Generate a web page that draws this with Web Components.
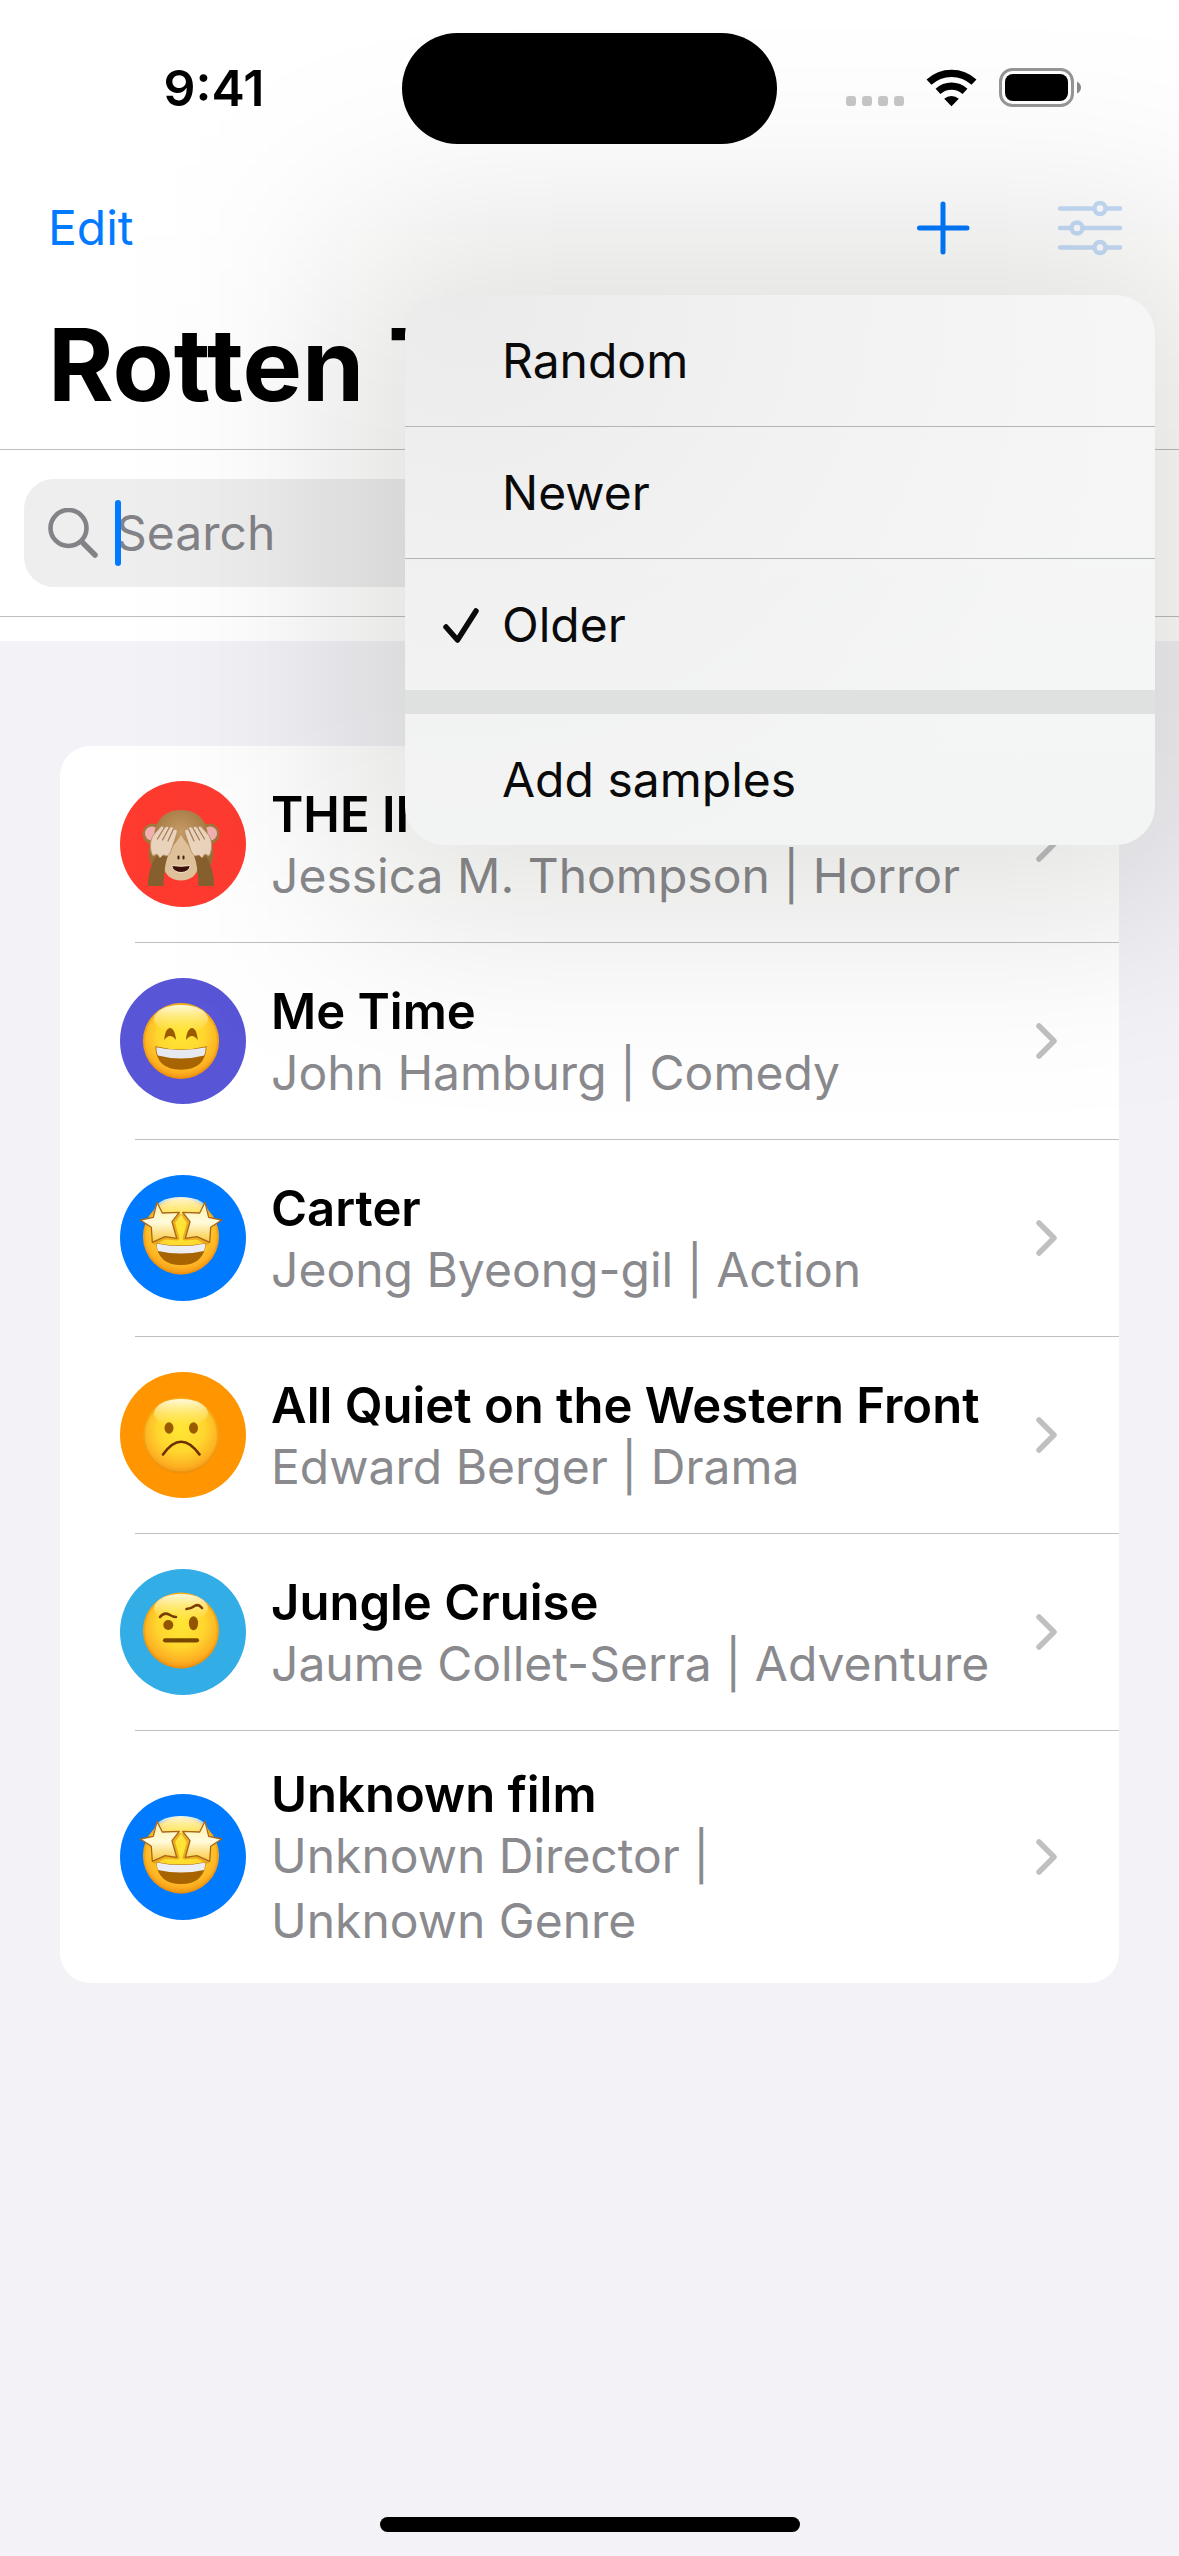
<!DOCTYPE html>
<html lang="en">
<head>
<meta charset="utf-8">
<meta name="viewport" content="width=device-width, initial-scale=1">
<title>Films</title>
<style>
  html, body { margin: 0; min-height: 100%; }
  body {
    --tint: #007aff;
    --grouped: #f2f2f7;
    --secondary: #8a8a8e;
    --separator: #bfbfc1;
    font-family: Inter, "Liberation Sans", sans-serif;
    font-size: 48px;
    line-height: 60px;
    color: #000;
    background: var(--grouped);
  }
</style>
</head>
<body>
<film-app>
  <status-bar slot="header" time="9:41"></status-bar>
  <nav-bar slot="header">
    <option-menu slot="menu">
      <menu-option>Random</menu-option>
      <menu-option>Newer</menu-option>
      <menu-option checked>Older</menu-option>
      <menu-option section>Add samples</menu-option>
    </option-menu>
  </nav-bar>
  <large-title slot="header">Rotten T</large-title>
  <search-field slot="header"></search-field>
  <film-list>
    <film-row mood="monkey" color="#ff3b30">THE IN<span slot="detail">Jessica M. Thompson | Horror</span></film-row>
    <film-row mood="grin" color="#5856d6">Me Time<span slot="detail">John Hamburg | Comedy</span></film-row>
    <film-row mood="stars" color="#007aff">Carter<span slot="detail">Jeong Byeong-gil | Action</span></film-row>
    <film-row mood="sad" color="#ff9500">All Quiet on the Western Front<span slot="detail">Edward Berger | Drama</span></film-row>
    <film-row mood="doubt" color="#32ade6">Jungle Cruise<span slot="detail">Jaume Collet-Serra | Adventure</span></film-row>
    <film-row mood="stars" color="#007aff">Unknown film<span slot="detail">Unknown Director&nbsp;| Unknown&nbsp;Genre</span></film-row>
  </film-list>
  <home-indicator slot="footer"></home-indicator>
</film-app>

<script>
const define = (name, html, setup) => {
  const tpl = document.createElement('template');
  tpl.innerHTML = html;
  customElements.define(name, class extends HTMLElement {
    constructor() {
      super();
      this.attachShadow({ mode: 'open' }).append(tpl.content.cloneNode(true));
    }
    connectedCallback() { if (setup) setup(this, this.shadowRoot); }
  });
};

define('film-app', `
  <style>
    :host { display: flex; flex-direction: column; min-height: 100vh; position: relative; overflow: hidden; }
    header { background: #fff; padding-bottom: 24px; position: relative; z-index: 1; }
    main { flex: 1; padding: 105px 60px 60px; }
  </style>
  <header><slot name="header"></slot></header>
  <main><slot></slot></main>
  <slot name="footer"></slot>`);

define('status-bar', `
  <style>
    :host { display: grid; grid-template-columns: 1fr 375px 1fr; align-items: start; height: 162px; }
    .time { padding: 58px 0 0 26px; text-align: center; font-weight: 600; font-size: 50px; }
    .island { height: 111px; margin-top: 33px; border-radius: 56px; background: #000; }
    .icons { display: flex; justify-content: flex-end; padding: 66px 96px 0 0; }
    svg { display: block; }
  </style>
  <div class="time"></div>
  <div class="island"></div>
  <div class="icons">
    <svg width="240" height="44" viewBox="0 0 240 44" role="img" aria-label="Wi-Fi on, battery full">
      <g fill="#c7c7c7"><rect x="3" y="30" width="10" height="10" rx="3"/><rect x="19" y="30" width="10" height="10" rx="3"/><rect x="35" y="30" width="10" height="10" rx="3"/><rect x="51" y="30" width="10" height="10" rx="3"/></g>
      <g fill="none" stroke="#000" stroke-width="7.2">
        <path d="M86 16.2a33 33 0 0 1 45 0"/>
        <path d="M95 25.4a20 20 0 0 1 27 0"/>
      </g>
      <path d="M108.500 40.300l-7.300-7.600a11 11 0 0 1 14.600 0z"/>
      <rect x="157.500" y="3.500" width="72" height="36" rx="12" fill="none" stroke="#969696" stroke-width="3"/>
      <rect x="162" y="8" width="63" height="27" rx="8"/>
      <path d="M234 15.500q4 2 4 6t-4 6z" fill="#8a8a8a"/>
    </svg>
  </div>`, (el, root) => { root.querySelector('.time').textContent = el.getAttribute('time'); });

define('nav-bar', `
  <style>
    :host { display: flex; align-items: center; height: 132px; padding: 0 48px; position: relative; z-index: 2; }
    button { border: 0; padding: 0; background: none; font: inherit; color: var(--tint); }
    .edit { margin-right: auto; }
    .actions { display: flex; gap: 73px; align-items: center; padding-right: 9px; }
    svg { display: block; }
    .menu { position: absolute; top: 100%; right: 24px; width: min(750px, 80vw); padding-top: 1px; }
  </style>
  <button class="edit" type="button">Edit</button>
  <div class="actions">
    <button type="button" aria-label="Add film">
      <svg width="72" height="72" viewBox="0 0 72 72" fill="none" stroke="currentColor" stroke-width="5" stroke-linecap="round"><path d="M12.500 36h47.500M36 12v48"/></svg>
    </button>
    <button type="button" aria-label="Sort films" aria-expanded="true">
      <svg width="70" height="72" viewBox="0 0 70 72" fill="none" stroke="#c6ddf8" stroke-width="4.400" stroke-linecap="round">
        <path d="M8 16.500h33M55 16.500h13M8 36h10M32 36h36M8 55.500h33M55 55.500h13"/>
        <circle cx="48" cy="16.500" r="5.500"/><circle cx="25" cy="36" r="5.500"/><circle cx="48" cy="55.500" r="5.500"/>
      </svg>
    </button>
  </div>
  <div class="menu"><slot name="menu"></slot></div>`);

define('option-menu', `
  <style>
    :host { display: block; position: relative; }
    .shade { position: absolute; inset: -60px; background: rgba(8, 8, 0, .13); filter: blur(105px); pointer-events: none; }
    .panel {
      position: relative; border-radius: 39px; overflow: hidden;
      background: radial-gradient(circle at 8% 0, #ebebeb, rgba(240, 240, 240, .8) 35%, rgba(245, 245, 245, 0) 75%), linear-gradient(#f6f6f6, #f3f5f4);
    }
  </style>
  <div class="shade"></div>
  <div class="panel" role="menu"><slot></slot></div>`);

define('menu-option', `
  <style>
    :host { display: block; border-top: 1px solid #b3b6b5; }
    :host(:first-child) { border-top: 0; }
    :host([section]) { border-top: 24px solid #dfe0e0; }
    button {
      display: grid; grid-template-columns: 36px 1fr; gap: 23px; align-items: center;
      width: 100%; height: 131px; padding: 0 38px; border: 0; background: none;
      font: inherit; color: #0a0a0a; text-align: left;
    }
    svg { display: block; visibility: hidden; }
    :host([checked]) svg { visibility: visible; }
  </style>
  <button type="button" role="menuitemradio">
    <svg width="36" height="36" viewBox="0 0 36 36" fill="none" stroke="#0a0a0a" stroke-width="5.500" stroke-linecap="round" stroke-linejoin="round"><path d="M3 20l11.500 13L33 4"/></svg>
    <span><slot></slot></span>
  </button>`, (el, root) => {
    root.querySelector('button').setAttribute('aria-checked', String(el.hasAttribute('checked')));
  });

define('large-title', `
  <style>
    :host { display: block; border-bottom: 1px solid var(--separator); padding: 11px 48px 24px; overflow: hidden; }
    h1 { margin: 0; font-size: 100px; line-height: 120px; font-weight: 700; white-space: nowrap; }
  </style>
  <h1><slot></slot></h1>`);

define('search-field', `
  <style>
    :host { display: block; border-bottom: 1px solid var(--separator); padding: 29px 24px; }
    label { display: flex; align-items: center; gap: 18px; height: 108px; border-radius: 30px; background: #eeeeef; padding: 0 24px; box-sizing: border-box; }
    svg { flex: none; display: block; }
    .box { flex: 1; display: flex; position: relative; }
    .caret { position: absolute; left: -1px; top: -3px; width: 6px; height: 66px; border-radius: 3px; background: var(--tint); }
    input { flex: 1; min-width: 0; border: 0; padding: 0; background: none; outline: 0; font: inherit; height: 60px; }
    input::placeholder { color: #838387; opacity: 1; }
  </style>
  <label>
    <svg width="50" height="50" viewBox="0 0 50 50" fill="none" stroke="#838387" stroke-width="4.600" stroke-linecap="round"><circle cx="20.500" cy="20" r="18"/><path d="M34 34l13 13" stroke-width="5.500"/></svg>
    <span class="box"><input type="text" placeholder="Search" aria-label="Search"><span class="caret"></span></span>
  </label>`);

define('film-list', `
  <style>
    :host { display: block; background: #fff; border-radius: 30px; overflow: hidden; }
  </style>
  <div role="list"><slot></slot></div>`);

const RIM = cy => `<circle cx="61" cy="${cy}" r="37" fill="none" stroke="#e58a00" stroke-opacity=".4" stroke-width="2"/>`;
const FACE = cy => `<circle cx="61" cy="${cy}" r="38" fill="url(#face)"/>` + RIM(cy);
const SHINE = cy => `<ellipse cx="61" cy="${cy - 22}" rx="27" ry="14" fill="url(#shine)"/>`;

const MOODS = {
  stars: FACE(61.5) + SHINE(58) + `
    <path d="M36 68q25 5 50 0q-2 22-25 22t-25-22z" fill="#a86400"/>
    <path d="M36.500 68.500q24.500 5 49 0q-.5 5-1.500 7.500q-23 5-46 0q-1-2.500-1.500-7.500z" fill="#eceef3"/>
    <g fill="none" stroke="#e39a14" stroke-width="4" stroke-opacity=".7" stroke-linejoin="round">
      <path d="M59.300 38.500L53 47.500 57.500 63.500 45 62.500 33 68.500"/>
      <path d="M62.700 38.500L69 47.500 64.500 63.500 77 62.500 89 68.500"/>
    </g>
    <g fill="url(#star)" stroke="#a8651a" stroke-width="1.300" stroke-linejoin="round">
      <path d="M37 27.300L42.300 38 59.300 37.300 52 46.700 56.700 63.300 45 61.700 32.300 67.300 31.300 52.300 20.300 45 33.300 42.300z"/>
      <path d="M85 27.300L79.700 38 62.700 37.300 70 46.700 65.300 63.300 77 61.700 89.700 67.300 90.700 52.300 101.700 45 88.700 42.300z"/>
    </g>`,
  grin: FACE(63) + SHINE(63) + `
    <path d="M44.300 62C45 46 55 46 56 62Q50 54 44.300 62zM66 62C67 46 77 46 77.700 62Q72 54 66 62z" fill="#9a5a00"/>
    <path d="M35.300 68.300q25.700 6.500 51.400 0q-1 23.400-25.700 23.400t-25.700-23.400z" fill="#a86400"/>
    <path d="M36.300 69.200q24.700 5.500 49.400 0q0 5-1.500 8.300q-23.200 6-46.400 0q-1.500-3.300-1.500-8.300z" fill="#e6e9f0"/>`,
  sad: FACE(63.5) + SHINE(63) + `
    <ellipse cx="49" cy="56" rx="4.500" ry="5.700" fill="#9a5a00"/><ellipse cx="73.500" cy="56" rx="4.500" ry="5.700" fill="#9a5a00"/>
    <path d="M43 82.500q18-25.500 36.500 0" fill="none" stroke="#6a3000" stroke-width="2.600" stroke-linecap="round"/>`,
  doubt: FACE(61.5) + SHINE(61) + `
    <circle cx="48.300" cy="56" r="5" fill="#935500"/><ellipse cx="73.500" cy="54.300" rx="4.600" ry="7" fill="#935500"/>
    <path d="M40 48q4-5 9-2.500q4 2.500 7 2.500M66.500 40q5-.5 9-3.500q3-1.500 6.500 2.500" fill="none" stroke="#7a3c00" stroke-width="2.600" stroke-linecap="round"/>
    <path d="M45 71.300h32" stroke="#7a4700" stroke-width="4.200" stroke-linecap="round"/>`,
  monkey: `
    <g fill="#a3773f"><circle cx="33" cy="53" r="10.500"/><circle cx="89" cy="53" r="10.500"/></g>
    <g fill="#f3b0b2"><circle cx="32" cy="52.500" r="7"/><circle cx="90" cy="52.500" r="7"/></g>
    <path d="M61 29c17 0 26 11 27 26c5 7 7 17 4 26c-3 7-11 11-16 11H46c-5 0-13-4-16-11c-3-9-1-19 4-26c1-15 10-26 27-26z" fill="url(#fur)"/>
    <path d="M61 54c5 9 17 19 17 31c0 9-8 14.500-17 14.500s-17-5.500-17-14.500c0-12 12-22 17-31z" fill="#dfc19c"/>
    <path d="M58.500 75.500v2M63.500 75.500v2" stroke="#40200c" stroke-width="2" stroke-linecap="round"/>
    <path d="M51.500 84.500q9.500 1.500 19 0q-2 7-9.500 7t-9.500-7z" fill="#3d0e0c" stroke="#f4e4c7" stroke-width="1"/>
    <path d="M37 74l11 1c-3 7-4 17-4.500 30H28c0-12 3-23 9-31zM85 74l-11 1c3 7 4 17 4.500 30H94c0-12-3-23-9-31z" fill="#87602f"/>
    <g fill="#ead4bd" stroke="#b99168" stroke-width=".9" stroke-linejoin="round">
      <path d="M31.500 72c-2-7-1-14 2-18l7-8c2-2 4 0 3 2l2-2c2-1.500 4 0 3 2l2-2c2-1 3.500 1 2.500 3l2-1c2 0 2.500 2 2 4l-5 15c-1 4-3 7-5 8l-4-1-3 3-3-4-4 2z"/>
      <path d="M90.500 72c2-7 1-14-2-18l-7-8c-2-2-4 0-3 2l-2-2c-2-1.500-4 0-3 2l-2-2c-2-1-3.500 1-2.500 3l-2-1c-2 0-2.500 2-2 4l5 15c1 4 3 7 5 8l4-1 3 3 3-4 4 2z"/>
    </g>
    <path d="M43.500 48l-6 10M48.500 48l-6 11M53 49l-5 11M78.500 48l6 10M73.500 48l6 11M69 49l5 11" stroke="#a87a50" stroke-width="1.200" stroke-linecap="round"/>`
};

define('mood-badge', `
  <style>
    :host { display: block; flex: none; width: 126px; height: 126px; border-radius: 50%; }
    svg { display: block; }
  </style>
  <svg width="126" height="126" viewBox="0 0 126 126" aria-hidden="true">
    <defs>
      <radialGradient id="face" cx=".5" cy=".4" r=".62" fx=".5" fy=".42">
        <stop offset="0" stop-color="#ffe733"/><stop offset=".5" stop-color="#ffd62e"/><stop offset=".82" stop-color="#fdb022"/><stop offset="1" stop-color="#ee8c10"/>
      </radialGradient>
      <linearGradient id="shine" x1="0" y1="0" x2="0" y2="1"><stop offset="0" stop-color="#fffde6" stop-opacity=".95"/><stop offset="1" stop-color="#fff27a" stop-opacity="0"/></linearGradient>
      <linearGradient id="star" x1="0" y1="0" x2="0" y2="1"><stop offset="0" stop-color="#fff0a8"/><stop offset=".5" stop-color="#fffbdc"/><stop offset="1" stop-color="#fbc93c"/></linearGradient>
      <radialGradient id="fur" cx=".5" cy=".35" r=".6"><stop offset="0" stop-color="#c79c66"/><stop offset="1" stop-color="#9a6f38"/></radialGradient>
    </defs>
    <g></g>
  </svg>`, (el, root) => {
    root.querySelector('g').innerHTML = MOODS[el.getAttribute('mood')] || '';
    el.style.background = el.getAttribute('color') || '';
  });

define('film-row', `
  <style>
    :host { display: block; }
    a { display: flex; align-items: center; gap: 25px; min-height: 196px; padding: 30px 60px; box-sizing: border-box; color: inherit; text-decoration: none; }
    .text { flex: 1; min-width: 0; padding: 5px 0 0; }
    .title { font-size: 49px; font-weight: 600; line-height: 57px; }
    .detail { color: var(--secondary); line-height: 65px; text-wrap: balance; }
    .chevron { flex: none; display: block; }
    .line { height: 1px; margin-left: 75px; background: var(--separator); }
    :host(:last-child) .line { display: none; }
  </style>
  <div role="listitem">
    <a href="#">
      <div class="text"><div class="title"><slot></slot></div><div class="detail"><slot name="detail"></slot></div></div>
      <svg class="chevron" width="24" height="36" viewBox="0 0 24 36" fill="none" stroke="#c0c0c2" stroke-width="5.500" stroke-linecap="round" stroke-linejoin="round"><path d="M4 3l15 15-15 15"/></svg>
    </a>
    <div class="line"></div>
  </div>`, (el, root) => {
    const badge = document.createElement('mood-badge');
    badge.setAttribute('mood', el.getAttribute('mood'));
    badge.setAttribute('color', el.getAttribute('color'));
    root.querySelector('a').prepend(badge);
  });

define('home-indicator', `
  <style>
    :host { display: flex; justify-content: center; padding: 0 0 24px; }
    div { width: 420px; height: 15px; border-radius: 8px; background: #000; }
  </style>
  <div></div>`);
</script>
</body>
</html>
